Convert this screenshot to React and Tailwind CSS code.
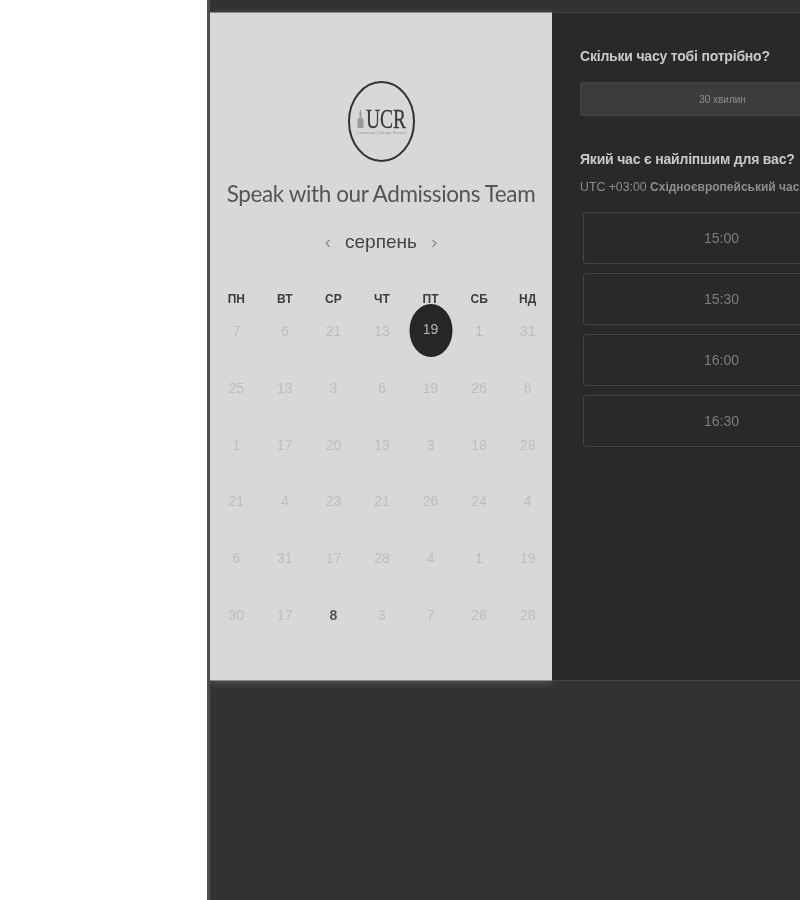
import React from "react";

const dayNames = ["ПН", "ВТ", "СР", "ЧТ", "ПТ", "СБ", "НД"];

const weeks = [
  [7, 6, 21, 13, 19, 1, 31],
  [25, 13, 3, 6, 19, 26, 6],
  [1, 17, 20, 13, 3, 18, 28],
  [21, 4, 23, 21, 26, 24, 4],
  [6, 31, 17, 28, 4, 1, 19],
  [30, 17, 8, 3, 7, 28, 28],
];

const slots = ["15:00", "15:30", "16:00", "16:30"];

function Logo() {
  return (
    <svg width="69" height="83" viewBox="0 0 69 83" className="block">
      <ellipse cx="34.5" cy="41.5" rx="32.5" ry="39.5" fill="none" stroke="#333333" strokeWidth="2" />
      <path d="M10.5 48V39l2-1v-5l1-4 1 4v5l2 1v9z" fill="#9a9a9a" />
      <text x="39" y="48" textAnchor="middle" fontFamily="'Liberation Serif', serif" fontSize="28" textLength="40" lengthAdjust="spacingAndGlyphs" fill="#3a3a3a" stroke="#3a3a3a" strokeWidth="0.3">
        UCR
      </text>
      <text x="34.5" y="54" textAnchor="middle" fontFamily="'Liberation Sans', sans-serif" fontSize="3.4" textLength="48" fill="#8a8a8a">
        Literature College Source
      </text>
    </svg>
  );
}

function Calendar() {
  return (
    <div className="w-[342px] h-[669px] shrink-0 bg-[#d8d8d8] border-y border-[#8a8a8a] flex flex-col items-center pt-[67px] shadow-[0_2px_8px_rgba(255,255,255,0.18)]">
      <Logo />
      <h1 className="mt-[16px] text-[22.5px] leading-[30px] tracking-[-0.4px] text-[#555555] font-['Lato',sans-serif] whitespace-nowrap">
        Speak with our Admissions Team
      </h1>

      <div className="mt-[19px] h-7 flex items-center justify-center gap-[14px] font-['Liberation_Sans',sans-serif]">
        <span className="text-[19px] text-[#8d8d8d]">‹</span>
        <span className="text-[19px] text-[#444444]">серпень</span>
        <span className="text-[19px] text-[#8d8d8d]">›</span>
      </div>

      <div className="mt-[32px] w-full pl-[2px] font-['Liberation_Sans',sans-serif]">
        <div className="grid grid-cols-7 h-[22px] items-center">
          {dayNames.map((d) => (
            <div key={d} className="text-center text-[12px] font-bold text-[#3c3c3c]">
              {d}
            </div>
          ))}
        </div>
        <div className="mt-[11px]">
          {weeks.map((week, i) => (
            <div key={i} className="grid grid-cols-7 h-[56.8px]">
              {week.map((n, j) => {
                const selected = i === 0 && j === 4;
                const today = i === 5 && j === 2;
                return (
                  <div key={j} className="relative flex justify-center">
                    {selected && (
                      <span className="absolute left-1/2 top-[-17px] w-[43px] h-[53px] -translate-x-1/2 rounded-[50%] bg-[#262626]" />
                    )}
                    <span
                      className={`relative text-[14px] leading-5 ${
                        selected ? "text-[#b5b5b5] -mt-[2px]" : today ? "font-bold text-[#555555]" : "text-[#bdbdbd]"
                      }`}
                    >
                      {n}
                    </span>
                  </div>
                );
              })}
            </div>
          ))}
        </div>
      </div>
    </div>
  );
}

function TimePanel() {
  return (
    <div className="w-[320px] shrink-0 h-[669px] bg-[#292929] border-y border-[#444444] pl-[28px] pt-[33px] font-['Liberation_Sans',sans-serif]">
      <h2 className="text-[14px] leading-[20px] tracking-[-0.2px] font-bold text-[#c9c9c9] whitespace-nowrap">Скільки часу тобі потрібно?</h2>

      <div className="mt-[16px] w-[285px] h-[34px] rounded-[3px] bg-[#3c3c3c] border border-[#464646] flex items-center justify-center text-[10px] text-[#8f8f8f]">
        30 хвилин
      </div>

      <h2 className="mt-[33px] text-[14px] leading-[20px] tracking-[-0.2px] font-bold text-[#c9c9c9] whitespace-nowrap">Який час є найліпшим для вас?</h2>
      <p className="mt-[10px] text-[12.3px] leading-[16px] text-[#8d8d8d] whitespace-nowrap">
        UTC +03:00 <span className="text-[12px] font-bold">Східноєвропейський час</span>
      </p>

      <div className="mt-[17px] ml-[3px] w-[277px] flex flex-col gap-[9px]">
        {slots.map((s) => (
          <div
            key={s}
            className="h-[52px] rounded-[3px] border border-[#444444] flex items-center justify-center text-[14px] text-[#7d7d7d]"
          >
            {s}
          </div>
        ))}
      </div>
    </div>
  );
}

export default function App() {
  return (
    <div className="flex w-[800px] h-[900px] overflow-hidden bg-white">
      <div className="w-[207px] shrink-0 bg-white" />
      <div className="flex-1 min-w-0 overflow-hidden bg-[#323232] border-l-[3px] border-[#4d4d4d] pt-[12px]">
        <div className="flex blur-[0.4px]">
          <Calendar />
          <TimePanel />
        </div>
      </div>
    </div>
  );
}
